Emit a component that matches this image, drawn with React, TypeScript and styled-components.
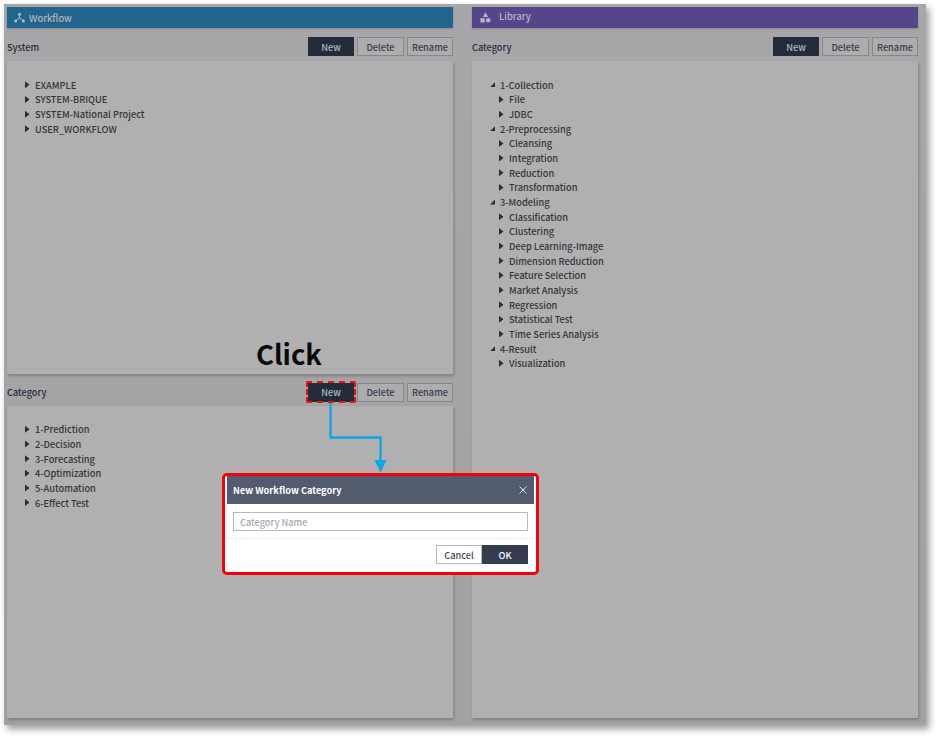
import styled, { createGlobalStyle } from 'styled-components';

type TreeNode = {
  label: string;
  open?: boolean;
  children?: TreeNode[];
};

const systemTree: TreeNode[] = [
  { label: 'EXAMPLE' },
  { label: 'SYSTEM-BRIQUE' },
  { label: 'SYSTEM-National Project' },
  { label: 'USER_WORKFLOW' },
];

const workflowCategories: TreeNode[] = [
  { label: '1-Prediction' },
  { label: '2-Decision' },
  { label: '3-Forecasting' },
  { label: '4-Optimization' },
  { label: '5-Automation' },
  { label: '6-Effect Test' },
];

const libraryTree: TreeNode[] = [
  { label: '1-Collection', open: true, children: [{ label: 'File' }, { label: 'JDBC' }] },
  {
    label: '2-Preprocessing',
    open: true,
    children: [{ label: 'Cleansing' }, { label: 'Integration' }, { label: 'Reduction' }, { label: 'Transformation' }],
  },
  {
    label: '3-Modeling',
    open: true,
    children: [
      { label: 'Classification' },
      { label: 'Clustering' },
      { label: 'Deep Learning-Image' },
      { label: 'Dimension Reduction' },
      { label: 'Feature Selection' },
      { label: 'Market Analysis' },
      { label: 'Regression' },
      { label: 'Statistical Test' },
      { label: 'Time Series Analysis' },
    ],
  },
  { label: '4-Result', open: true, children: [{ label: 'Visualization' }] },
];

const GlobalStyle = createGlobalStyle`
  html, body {
    margin: 0;
    padding: 0;
    background: #fff;
  }

  body {
    font-family: "Noto Sans CJK KR", "Noto Sans", sans-serif;
  }
`;

const Page = styled.div`
  position: relative;
  width: 936px;
  height: 739px;
  overflow: hidden;
  padding: 4px 0 0 4px;
  box-sizing: border-box;
`;

const Frame = styled.div`
  width: 922px;
  height: 721px;
  box-sizing: border-box;
  padding: 3px 8px 7px 3px;
  display: grid;
  grid-template-columns: 446px 446px;
  column-gap: 19px;
  background: linear-gradient(#a7a7a9, #a2a2a4);
  box-shadow: 3px 4px 7px rgba(0 0 0 / 40%);
`;

const Column = styled.section`
  display: flex;
  flex-direction: column;
  min-height: 0;
`;

const Banner = styled.header<{ $tone: string; $inset: number; $gap: number }>`
  height: 21px;
  flex-shrink: 0;
  display: flex;
  align-items: center;
  gap: ${({ $gap }) => $gap}px;
  padding-left: ${({ $inset }) => $inset}px;
  background: ${({ $tone }) => $tone};
  color: #b0b8c4;
  font-size: 9.4px;
  font-weight: 500;
  box-shadow: 0 1px 2px rgba(0 0 0 / 20%);
`;

const BannerLabel = styled.span<{ $raised?: boolean }>`
  padding-bottom: ${({ $raised }) => ($raised ? '4px' : '0')};
`;

const BannerIcon = styled.svg`
  width: 11px;
  height: 11px;
  flex-shrink: 0;
  fill: #b4bac4;
`;

const Toolbar = styled.div<{ $top: number }>`
  height: 19px;
  flex-shrink: 0;
  margin-top: ${({ $top }) => $top}px;
  display: flex;
  align-items: center;
  gap: 3px;
`;

const SectionTitle = styled.h2`
  margin: 0 auto 0 0;
  font-size: 9.2px;
  font-weight: 500;
  color: #242c3c;
`;

const ActionButton = styled.button<{ $primary?: boolean; $wide?: boolean }>`
  height: 19px;
  width: ${({ $wide }) => ($wide ? '47px' : '46px')};
  padding: 0;
  box-sizing: border-box;
  font: inherit;
  font-size: 9.2px;
  font-weight: 500;
  border: 1px solid ${({ $primary }) => ($primary ? '#232c3b' : '#84878e')};
  background: ${({ $primary }) => ($primary ? '#232c3b' : '#adadae')};
  color: ${({ $primary }) => ($primary ? '#b4b9c2' : '#363d4b')};
`;

const TreePanel = styled.div<{ $top: number }>`
  flex: 1;
  min-height: 0;
  margin-top: ${({ $top }) => $top}px;
  padding: 16.5px 18px;
  box-sizing: border-box;
  background: #b0b0b0;
  box-shadow: 1px 2px 3px rgba(0 0 0 / 22%);
`;

const TreeList = styled.ul<{ $nested?: boolean }>`
  list-style: none;
  margin: 0;
  padding: 0 0 0 ${({ $nested }) => ($nested ? '9px' : '0')};
`;

const TreeRow = styled.div`
  height: 14.67px;
  display: flex;
  align-items: center;
  gap: 5px;
  font-size: 9.25px;
  font-weight: 500;
  color: #33353b;
  white-space: nowrap;
`;

const Caret = styled.span`
  width: 5px;
  height: 7px;
  flex-shrink: 0;
  background: #2a2c31;
  clip-path: polygon(0 0, 90% 50%, 0 100%);
`;

const OpenCaret = styled.span`
  width: 5px;
  height: 5px;
  flex-shrink: 0;
  background: #2a2c31;
  clip-path: polygon(100% 0, 100% 100%, 0 100%);
`;

const Tree = ({ nodes, nested }: { nodes: TreeNode[]; nested?: boolean }) => (
  <TreeList $nested={nested}>
    {nodes.map((node) => (
      <li key={node.label}>
        <TreeRow>
          {node.open ? <OpenCaret /> : <Caret />}
          {node.label}
        </TreeRow>
        {node.children && <Tree nodes={node.children} nested />}
      </li>
    ))}
  </TreeList>
);

const Buttons = () => (
  <>
    <ActionButton $primary>New</ActionButton>
    <ActionButton $wide>Delete</ActionButton>
    <ActionButton>Rename</ActionButton>
  </>
);

const ClickLabel = styled.div`
  position: absolute;
  left: 256px;
  top: 333px;
  font-size: 27.4px;
  line-height: 40px;
  font-weight: 700;
  color: #0a0a0a;
`;

const DashedMark = styled.div`
  position: absolute;
  left: 306px;
  top: 381px;
  width: 50px;
  height: 22px;
  box-sizing: border-box;
  border: 2.5px dashed #ee0f18;
  border-radius: 2px;
`;

const Connector = styled.svg`
  position: absolute;
  left: 320px;
  top: 400px;
  width: 80px;
  height: 74px;
`;

const DialogOutline = styled.div`
  position: absolute;
  left: 222px;
  top: 473px;
  width: 317px;
  height: 102px;
  box-sizing: border-box;
  padding: 0 2px 1px;
  border: 3px solid #f5000a;
  border-radius: 5px;
  background: #fff;
`;

const Dialog = styled.div`
  height: 100%;
  display: flex;
  flex-direction: column;
  background: #fff;
`;

const DialogHeader = styled.div`
  height: 28px;
  flex-shrink: 0;
  display: flex;
  align-items: center;
  justify-content: space-between;
  padding: 0 7px 0 6px;
  background: #535b6e;
  color: #fff;
  font-size: 9.2px;
  font-weight: 700;
`;

const CloseIcon = styled.svg`
  width: 8px;
  height: 8px;
  stroke: #e6e8ec;
  stroke-width: 1;
  fill: none;
`;

const DialogBody = styled.div`
  height: 35px;
  flex-shrink: 0;
  box-sizing: border-box;
  padding: 8px 6px 0;
  border-bottom: 1px solid #eeeff1;
`;

const NameInput = styled.input`
  display: block;
  width: 100%;
  height: 19px;
  box-sizing: border-box;
  padding: 0 6px;
  font: inherit;
  font-size: 9.2px;
  font-weight: 500;
  border: 1px solid #b4b8c0;
  outline: none;

  &::placeholder {
    color: #a3a7b0;
    opacity: 1;
  }
`;

const DialogFooter = styled.div`
  display: flex;
  justify-content: flex-end;
  padding: 6px 6px 0;
`;

const DialogButton = styled.button<{ $primary?: boolean }>`
  width: 46px;
  height: 19px;
  padding: 0;
  box-sizing: border-box;
  font: inherit;
  font-size: 9.2px;
  font-weight: 500;
  border: 1px solid ${({ $primary }) => ($primary ? '#333c50' : '#b4b8c0')};
  background: ${({ $primary }) => ($primary ? '#333c50' : '#fff')};
  color: ${({ $primary }) => ($primary ? '#fff' : '#40495a')};
`;

export default function App() {
  return (
    <Page>
      <GlobalStyle />
      <Frame>
        <Column>
          <Banner $tone="#23648c" $inset={7} $gap={4}>
            <BannerIcon viewBox="0 0 12 12">
              <circle cx="6" cy="2.5" r="1.7" />
              <circle cx="1.8" cy="9.8" r="1.7" />
              <circle cx="10.2" cy="9.8" r="1.7" />
              <path d="M5.5 3h1v3.2l3.4 2.4-.6.8L6 7.2 2.7 9.4l-.6-.8 3.4-2.4z" />
            </BannerIcon>
            <BannerLabel>Workflow</BannerLabel>
          </Banner>
          <Toolbar $top={9}>
            <SectionTitle>System</SectionTitle>
            <Buttons />
          </Toolbar>
          <TreePanel $top={5}>
            <Tree nodes={systemTree} />
          </TreePanel>
          <Toolbar $top={9}>
            <SectionTitle>Category</SectionTitle>
            <Buttons />
          </Toolbar>
          <TreePanel $top={4}>
            <Tree nodes={workflowCategories} />
          </TreePanel>
        </Column>
        <Column>
          <Banner $tone="#56458a" $inset={8} $gap={8}>
            <BannerIcon viewBox="0 0 12 12">
              <path d="M6 0.3 8.8 5.5H3.2z" />
              <rect x="0.5" y="6.8" width="4.6" height="4.6" />
              <circle cx="9" cy="9" r="2.5" />
            </BannerIcon>
            <BannerLabel $raised>Library</BannerLabel>
          </Banner>
          <Toolbar $top={9}>
            <SectionTitle>Category</SectionTitle>
            <Buttons />
          </Toolbar>
          <TreePanel $top={5}>
            <Tree nodes={libraryTree} />
          </TreePanel>
        </Column>
      </Frame>

      <ClickLabel>Click</ClickLabel>
      <DashedMark />
      <Connector viewBox="0 0 80 74">
        <path d="M10.5 3V37.5H60.5V62" fill="none" stroke="#0ba5e6" strokeWidth="2.3" />
        <path d="M54.5 60H66.5L60.5 72.5z" fill="#0ba5e6" />
      </Connector>
      <DialogOutline>
        <Dialog>
          <DialogHeader>
            New Workflow Category
            <CloseIcon viewBox="0 0 8 8">
              <path d="M0.5 0.5 7.5 7.5M7.5 0.5 0.5 7.5" />
            </CloseIcon>
          </DialogHeader>
          <DialogBody>
            <NameInput placeholder="Category Name" />
          </DialogBody>
          <DialogFooter>
            <DialogButton>Cancel</DialogButton>
            <DialogButton $primary>OK</DialogButton>
          </DialogFooter>
        </Dialog>
      </DialogOutline>
    </Page>
  );
}
